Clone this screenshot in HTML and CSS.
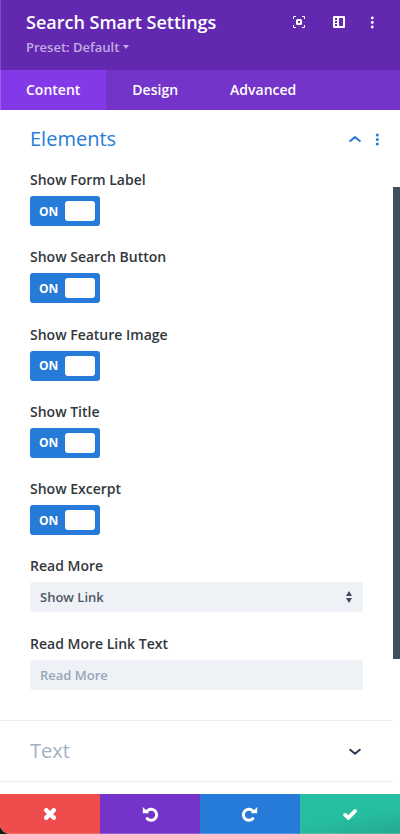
FILE: index.html
```html
<!DOCTYPE html>
<html lang="en">
<head>
<meta charset="utf-8">
<title>Search Smart Settings</title>
<link rel="stylesheet" href="styles.css">
</head>
<body>
<div class="modal">
  <header class="header">
    <div class="titles">
      <h1>Search Smart Settings</h1>
      <div class="preset">Preset: Default <svg width="6" height="4" viewBox="0 0 6 4"><path d="M0 0h6L3 4z"/></svg></div>
    </div>
    <div class="tools">
      <svg width="12" height="12" viewBox="0 0 12 12" fill="none" stroke="#fff"><path d="M.5 3V.5H3M9 .5h2.500V3M11.500 9v2.500H9M3 11.500H.5V9"/><rect x="4" y="4" width="4" height="4" rx=".5" stroke-width="2"/></svg>
      <svg width="12" height="12" viewBox="0 0 12 12"><path fill="#fff" fill-rule="evenodd" d="M1 0h10a1 1 0 0 1 1 1v10a1 1 0 0 1-1 1H1a1 1 0 0 1-1-1V1a1 1 0 0 1 1-1zM6 2v8h4V2zM2 2v2h2V2zM2 5v2h2V5zM2 8v2h2V8z"/></svg>
      <svg width="4" height="13" viewBox="0 0 4 13" fill="#fff"><circle cx="2.300" cy="2" r="1.400"/><circle cx="2.300" cy="6.500" r="1.400"/><circle cx="2.300" cy="11" r="1.400"/></svg>
    </div>
  </header>
  <nav class="tabs">
    <a class="tab active">Content</a><a class="tab">Design</a><a class="tab">Advanced</a>
  </nav>
  <main class="body">
    <section class="group">
      <div class="group-head">
        <h2>Elements</h2>
        <svg class="chevron" width="12" height="7" viewBox="0 0 12 7"><path d="M1.200 5L6 1.100l4.800 3.900"/></svg>
        <svg class="dots" width="4" height="13" viewBox="0 0 4 13"><circle cx="2.300" cy="2" r="1.500"/><circle cx="2.300" cy="6.500" r="1.500"/><circle cx="2.300" cy="11" r="1.500"/></svg>
      </div>
      <div class="field"><label>Show Form Label</label><div class="toggle"><span>ON</span><i></i></div></div>
      <div class="field"><label>Show Search Button</label><div class="toggle"><span>ON</span><i></i></div></div>
      <div class="field"><label>Show Feature Image</label><div class="toggle"><span>ON</span><i></i></div></div>
      <div class="field"><label>Show Title</label><div class="toggle"><span>ON</span><i></i></div></div>
      <div class="field"><label>Show Excerpt</label><div class="toggle"><span>ON</span><i></i></div></div>
      <div class="field"><label>Read More</label><div class="control">Show Link<svg width="6" height="12" viewBox="0 0 6 12"><path d="M0 5h6L3 0zM0 7h6l-3 5z"/></svg></div></div>
      <div class="field"><label>Read More Link Text</label><div class="control placeholder">Read More</div></div>
    </section>
    <section class="group closed">
      <h2>Text</h2>
      <svg class="chevron" width="12" height="7" viewBox="0 0 12 7"><path d="M1.200 1.800L6 5.700l4.800-3.900"/></svg>
    </section>
    <div class="scrollbar"></div>
  </main>
  <footer class="actions">
    <div class="action discard"><svg width="12" height="12" viewBox="0 0 12 12"><path d="M2.200 2.200l7.600 7.600M9.800 2.200L2.200 9.800" stroke-width="4.400" stroke-linecap="round"/></svg></div>
    <div class="action undo"><svg width="16" height="16" viewBox="0 0 16 16"><path d="M4.600 5.600A5.500 5.500 0 1 1 5.200 12.600" stroke-width="3" stroke-linecap="round"/><path d="M.800 1l6.400 6.300H.800z" class="tip"/></svg></div>
    <div class="action redo"><svg width="16" height="16" viewBox="0 0 16 16"><path d="M11.400 5.600A5.500 5.500 0 1 0 10.800 12.600" stroke-width="3" stroke-linecap="round"/><path d="M15.200 1L8.800 7.300h6.400z" class="tip"/></svg></div>
    <div class="action save"><svg width="14" height="11" viewBox="0 0 14 11"><path d="M2.200 5.900L5.400 8.800 12 2.100" stroke-width="3.800" stroke-linecap="round"/></svg></div>
  </footer>
</div>
</body>
</html>
```
FILE: styles.css
```css
* { box-sizing: border-box; }
body { margin: 0; background: #102018; font-family: "Open Sans", sans-serif; font-weight: 600; }
h1, h2 { margin: 0; }
svg { display: block; flex: none; }
.modal { height: 834px; display: flex; flex-direction: column; overflow: hidden; border-radius: 0 0 0 10px; background: #fff; }
.header { height: 70px; flex: none; display: flex; justify-content: space-between; padding: 10px 26px 0; background: #6229b0; box-shadow: inset 1px 0 #7c50bd; color: #fff; }
h1 { font-size: 18px; line-height: 24px; font-weight: 600; }
.preset { display: flex; align-items: center; gap: 4px; margin-top: 4px; font-size: 13px; line-height: 18px; color: #c2a9e2; }
.preset svg { fill: #c2a9e2; }
.tools { display: flex; align-items: center; height: 24px; gap: 28px; }
.tools svg:last-child { margin-left: -3px; }
.tabs { height: 40px; flex: none; display: flex; background: #7433c9; }
.tab { padding: 0 26px; line-height: 40px; font-size: 14px; color: #fff; }
.tab.active { background: #8439e9; box-shadow: inset 1px 0 #9860ed; }
.body { position: relative; height: 684px; flex: none; background: #fff; }
.group { width: 393px; height: 611px; padding: 13px 30px 0; border-bottom: 1px solid #eee; }
.group-head { display: flex; align-items: center; height: 32px; margin-bottom: 17px; color: #267bd8; }
h2 { font-size: 20px; line-height: 32px; font-weight: 400; margin-right: auto; }
.chevron { fill: none; stroke: currentColor; stroke-width: 2; stroke-linecap: round; stroke-linejoin: round; }
.dots { fill: currentColor; margin: 0 -16px 0 14px; }
.field { height: 77.25px; }
label { display: block; height: 24px; font-size: 14px; line-height: 16px; color: #32373c; }
.toggle { display: flex; justify-content: space-between; align-items: center; width: 70px; height: 30px; padding: 0 5px 0 9px; border-radius: 3px; background: #267bd8; color: #fff; font-size: 12px; font-weight: 700; }
.toggle i { width: 30px; height: 20px; border-radius: 3px; background: #fff; }
.control { display: flex; align-items: center; justify-content: space-between; width: 333px; height: 30px; padding: 0 11px 0 10px; border-radius: 3px; background: #eef1f6; font-size: 13px; color: #4c5866; }
.control svg { fill: #414e5a; }
.placeholder { color: #98a7b8; }
.group.closed { display: flex; align-items: center; justify-content: space-between; height: 61px; padding: 0 32px 0 30px; color: #2b3c4e; }
.group.closed h2 { color: #a2b0c1; }
.scrollbar { position: absolute; right: 0; top: 77px; width: 7px; height: 472px; background: #414f5b; }
.actions { display: flex; height: 40px; flex: none; }
.action { flex: 1; display: flex; align-items: center; justify-content: center; box-shadow: inset 0 -1px rgba(255,255,255,.2); }
.action svg { fill: none; stroke: #fff; }
.action .tip { fill: #fff; stroke: none; }
.discard { background: #ef4c4d; }
.undo { background: #7433c9; }
.redo { background: #267bd8; }
.save { background: linear-gradient(170deg, #26bea0 55%, #24a88e); }
```
